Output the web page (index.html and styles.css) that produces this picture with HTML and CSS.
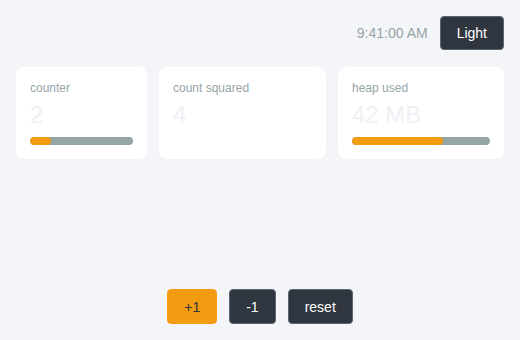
FILE: index.html
```html
<!DOCTYPE html>
<html>
<head>
<meta charset="utf-8">
<link rel="stylesheet" href="styles.css">
</head>
<body>
<div class="app">
  <header class="topbar">
    <span class="clock">9:41:00 AM</span>
    <button class="btn dark">Light</button>
  </header>
  <section class="cards">
    <div class="card">
      <div class="label">counter</div>
      <div class="value">2</div>
      <div class="bar"><div class="fill" style="width:20%"></div></div>
    </div>
    <div class="card">
      <div class="label">count squared</div>
      <div class="value">4</div>
    </div>
    <div class="card">
      <div class="label">heap used</div>
      <div class="value">42 MB</div>
      <div class="bar"><div class="fill" style="width:66%"></div></div>
    </div>
  </section>
  <footer class="controls">
    <button class="btn orange">+1</button>
    <button class="btn dark">-1</button>
    <button class="btn dark">reset</button>
  </footer>
</div>
</body>
</html>
```
FILE: styles.css
```css
* { box-sizing: border-box; }
html, body { margin: 0; padding: 0; }
body {
  background: #f4f5f9;
  font-family: "Liberation Sans", Arial, sans-serif;
  color: #2f3640;
}
.app {
  min-height: 340px;
  padding: 16px;
  display: flex;
  flex-direction: column;
}
.topbar {
  display: flex;
  justify-content: flex-end;
  align-items: center;
  gap: 12px;
  margin-bottom: 17px;
}
.clock {
  font-size: 14px;
  color: #95a5a6;
}
.btn {
  font-family: inherit;
  font-size: 14px;
  line-height: 16px;
  padding: 8px 16px;
  border-radius: 4px;
  border: 1px solid #5c6670;
  cursor: pointer;
}
.btn.dark {
  background: #2f3640;
  color: #ffffff;
}
.btn.orange {
  background: #f39c12;
  border-color: #f39c12;
  color: #2f3640;
}
.cards {
  display: grid;
  grid-template-columns: 131fr 167fr 166fr;
  gap: 12px;
}
.card {
  background: #ffffff;
  border-radius: 8px;
  padding: 14px;
}
.label {
  font-size: 12px;
  line-height: 14px;
  color: #95a5a6;
}
.value {
  margin-top: 5px;
  font-size: 24px;
  line-height: 30px;
  color: #eef0f5;
}
.bar {
  margin-top: 7px;
  height: 8px;
  border-radius: 4px;
  background: #95a5a6;
  overflow: hidden;
}
.fill {
  height: 100%;
  background: #f39c12;
  border-radius: 4px;
}
.controls {
  margin-top: auto;
  display: flex;
  justify-content: center;
  gap: 12px;
}
.controls .btn {
  padding-top: 9px;
  padding-bottom: 8px;
}
```
